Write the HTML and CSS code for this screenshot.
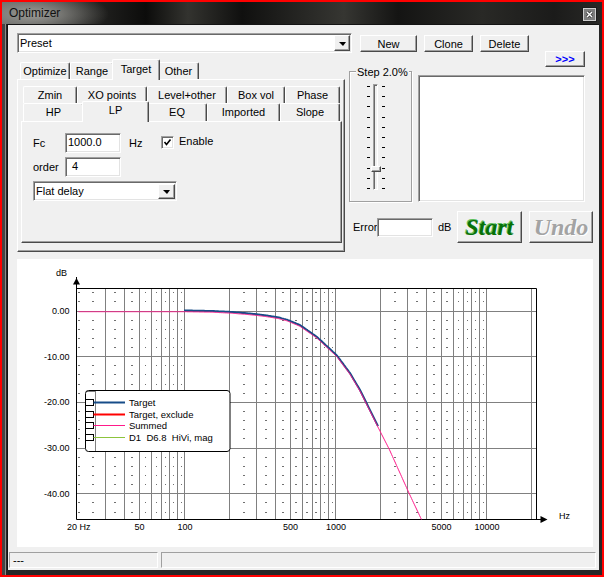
FILE: index.html
```html
<!DOCTYPE html>
<html lang="en">
<head>
  <meta charset="UTF-8" />
  <meta name="viewport" content="width=device-width, initial-scale=1" />
  <title>Optimizer</title>
  <link rel="stylesheet" href="styles.css">
</head>
<body>
  <div class="window">
    <div class="titlebar">
      <span class="title">Optimizer</span>
      <span class="close-btn">
        <svg width="15" height="15" viewBox="0 0 15 15">
          <rect x="0.5" y="0.5" width="14" height="14" fill="#7e7e7e" stroke="#1c1c1c"/>
          <rect x="1.5" y="1.5" width="12" height="12" fill="none" stroke="#cfcfcf"/>
          <path d="M5 5 L10 10 M10 5 L5 10" stroke="#3a3a3a" stroke-width="3"/>
          <path d="M5 5 L10 10 M10 5 L5 10" stroke="#ffffff" stroke-width="1.4"/>
        </svg>
      </span>
    </div>

    <div class="frame">
      <div class="client">
        <!-- preset row -->
        <div class="toolbar">
          <div class="combo preset">
            <span class="combo-text">Preset</span>
            <span class="drop-btn"><span class="arrow"></span></span>
          </div>
          <button class="btn btn-new">New</button>
          <button class="btn btn-clone">Clone</button>
          <button class="btn btn-delete">Delete</button>
        </div>

        <div class="main">
          <!-- tabs -->
          <div class="left">
            <div class="tab-row outer-tabs">
              <span class="tab">Optimize</span>
              <span class="tab">Range</span>
              <span class="tab active">Target</span>
              <span class="tab">Other</span>
            </div>
            <div class="panel panel-outer">
              <div class="tab-row inner-row1">
                <span class="tab">Zmin</span>
                <span class="tab">XO points</span>
                <span class="tab">Level+other</span>
                <span class="tab">Box vol</span>
                <span class="tab">Phase</span>
              </div>
              <div class="tab-row inner-row2">
                <span class="tab">HP</span>
                <span class="tab active">LP</span>
                <span class="tab">EQ</span>
                <span class="tab">Imported</span>
                <span class="tab">Slope</span>
              </div>
              <div class="panel panel-inner">
                <div class="field-row">
                  <span class="lbl">Fc</span>
                  <span class="input">1000.0</span>
                  <span class="unit">Hz</span>
                  <span class="check">
                    <svg width="9" height="9" viewBox="0 0 9 9">
                      <path d="M1.5 4 L3.5 6.5 L7.5 1.5" fill="none" stroke="#000" stroke-width="1.6"/>
                    </svg>
                  </span>
                  <span class="check-label">Enable</span>
                </div>
                <div class="field-row">
                  <span class="lbl">order</span>
                  <span class="input input-order">4</span>
                </div>
                <div class="combo delay">
                  <span class="combo-text">Flat delay</span>
                  <span class="drop-btn"><span class="arrow"></span></span>
                </div>
              </div>
            </div>
          </div>

          <!-- step, list, start -->
          <div class="side">
            <button class="btn more">&gt;&gt;&gt;</button>
            <div class="side-mid">
              <fieldset class="step">
                <legend>Step 2.0%</legend>
                <div class="slider">
                  <div class="ticks">
                    <i></i><i></i><i></i><i></i><i></i><i></i><i></i><i></i><i></i><i></i><i></i>
                  </div>
                  <div class="track"><span class="thumb"></span></div>
                  <div class="ticks ticks-right">
                    <i></i><i></i><i></i><i></i><i></i><i></i><i></i><i></i><i></i><i></i><i></i>
                  </div>
                </div>
              </fieldset>
              <div class="listbox"></div>
            </div>
            <div class="error-row">
              <span class="error-lbl">Error</span>
              <span class="input input-error"></span>
              <span class="db-lbl">dB</span>
              <button class="btn btn-big btn-start">Start</button>
              <button class="btn btn-big btn-undo">Undo</button>
            </div>
          </div>
        </div>

        <div class="chart">
          <svg id="plot" class="plot" width="576" height="288" viewBox="0 0 576 288"></svg>
        </div>

        <div class="statusbar">
          <div class="status-cell first">---</div>
          <div class="status-cell rest"></div>
        </div>
      </div>
    </div>
  </div>

  <script src="app.js"></script>
</body>
</html>
```

FILE: styles.css
```css
* {
  box-sizing: border-box;
  margin: 0;
  padding: 0;
}

body {
  font-family: "Liberation Sans", Arial, sans-serif;
  font-size: 11px;
  color: #000;
  background: #000;
}

.window {
  width: 604px;
  height: 577px;
  border: 2px solid #ff0000;
  display: flex;
  flex-direction: column;
  background: #2a2a2a;
}

/* title bar */
.titlebar {
  height: 22px;
  display: flex;
  justify-content: space-between;
  align-items: flex-start;
  background:
    radial-gradient(ellipse 75px 24px at 32px 12px, rgba(165, 165, 160, 0.9), rgba(165, 165, 160, 0)),
    linear-gradient(90deg, #5a5a58 0%, #262624 14%, #0c0c0b 24%, #33332f 31%, #10100f 40%, #363632 57%, #141413 66%, #292926 80%, #1b1b1a 92%, #292927 100%);
}

.title {
  padding-left: 7px;
  line-height: 23px;
  font-size: 12px;
  color: #111;
}

.close-btn {
  margin: 5px 5px 0 0;
  height: 15px;
}

.close-btn svg {
  display: block;
}

.frame {
  flex: 1;
  display: flex;
  padding: 0 3px 5px 5px;
  background: linear-gradient(90deg, #454545 0, #454545 3px, #8a8a8a 3px, #8a8a8a 4px, #262626 4px);
}

.client {
  flex: 1;
  display: flex;
  flex-direction: column;
  background: #f0f0f0;
  border-left: 1px solid #141414;
  border-top: 1px solid #141414;
}

/* common 3d widgets */
.btn {
  font: inherit;
  color: #000;
  background: #f0f0f0;
  border: 1px solid;
  border-color: #fff #4a4a4a #4a4a4a #fff;
  box-shadow: inset -1px -1px #a0a0a0;
}

.input,
.combo,
.listbox {
  background: #fff;
  border: 1px solid;
  border-color: #a0a0a0 #fff #fff #a0a0a0;
  box-shadow: inset 1px 1px #696969, inset -1px -1px #e3e3e3;
}

.combo {
  display: flex;
  align-items: center;
  height: 20px;
}

.combo-text {
  flex: 1;
  padding-left: 2px;
  line-height: 16px;
}

.drop-btn {
  width: 16px;
  height: 16px;
  margin-right: 1px;
  display: flex;
  align-items: center;
  justify-content: center;
  background: #f0f0f0;
  border: 1px solid;
  border-color: #fff #4a4a4a #4a4a4a #fff;
  box-shadow: inset -1px -1px #a0a0a0;
}

.arrow {
  width: 0;
  height: 0;
  border-left: 4px solid transparent;
  border-right: 3px solid transparent;
  border-top: 4px solid #000;
  margin-top: 1px;
}

/* preset row */
.toolbar {
  display: flex;
  align-items: flex-start;
  padding: 8px 0 0 9px;
}

.preset {
  width: 335px;
}

.toolbar .btn {
  height: 17px;
  margin-top: 2px;
  width: 49px;
  margin-left: 7px;
}

.toolbar .btn-new {
  width: 57px;
  margin-left: 8px;
}

.main {
  display: flex;
}

.left {
  width: 328px;
  margin-left: 9px;
  padding-top: 6px;
}

/* tabs */
.tab-row {
  display: grid;
  align-items: end;
}

.outer-tabs {
  grid-template-columns: 50px 44px 44px 41px;
  padding-left: 3px;
}

.inner-row1 {
  grid-template-columns: 54px 70px 80px 58px 55px;
  padding-left: 2px;
}

.inner-row2 {
  grid-template-columns: 61px 63px 60px 73px 60px;
  padding-left: 2px;
}

.tab {
  height: 17px;
  line-height: 16px;
  text-align: center;
  white-space: nowrap;
  background: #f0f0f0;
  border: 1px solid #fff;
  border-right-color: #4a4a4a;
  border-bottom: 0;
  border-radius: 2px 2px 0 0;
  box-shadow: inset -1px 0 #a0a0a0;
}

.inner-row2 .tab {
  height: 18px;
  line-height: 17px;
}

.tab.active {
  position: relative;
  z-index: 1;
  height: 21px;
  line-height: 18px;
  margin: 0 -2px -1px;
}

.inner-row2 .tab.active {
  height: 21px;
  line-height: 17px;
  margin-top: -2px;
}

.panel {
  border: 1px solid;
  border-color: #fff #4a4a4a #4a4a4a #fff;
  box-shadow: inset -1px -1px #a0a0a0;
}

.panel-outer {
  height: 173px;
  padding: 6px 0 0 3px;
}

.panel-inner {
  width: 321px;
  height: 122px;
  padding: 11px 0 0 11px;
}

.field-row {
  display: flex;
  align-items: center;
  height: 20px;
  margin-bottom: 4px;
}

.lbl {
  width: 32px;
}

.input {
  width: 56px;
  height: 20px;
  padding-left: 2px;
  line-height: 17px;
}

.input-order {
  padding-left: 6px;
}

.unit {
  width: 32px;
  margin-left: 8px;
}

.check {
  width: 13px;
  height: 13px;
  align-self: flex-start;
  margin-top: 3px;
  display: flex;
  align-items: center;
  justify-content: center;
  background: #fff;
  border: 1px solid;
  border-color: #a0a0a0 #fff #fff #a0a0a0;
  box-shadow: inset 1px 1px #696969, inset -1px -1px #e3e3e3;
}

.check-label {
  margin-left: 5px;
  align-self: flex-start;
  margin-top: 2px;
  line-height: 13px;
}

.delay {
  width: 144px;
}

.delay .drop-btn {
  width: 17px;
  height: 15px;
}

/* right side */
.side {
  width: 244px;
  margin-left: 4px;
  display: flex;
  flex-direction: column;
}

.more {
  align-self: flex-end;
  width: 40px;
  height: 16px;
  margin: -2px 8px 0 0;
  color: #0000ff;
  font-weight: bold;
  line-height: 12px;
}

.side-mid {
  display: flex;
  align-items: flex-start;
  margin-top: -3px;
}

.step {
  width: 63px;
  height: 138px;
  border: 1px solid #a0a0a0;
  box-shadow: inset 1px 1px #fff, 1px 1px #fff;
}

.step legend {
  margin-left: 6px;
  padding: 3px 1px 0;
  line-height: 11px;
  background: #f0f0f0;
}

.slider {
  display: flex;
  height: 106px;
  margin: 6px 0 0 17px;
}

.ticks {
  width: 3px;
  display: flex;
  flex-direction: column;
  justify-content: space-between;
  padding: 2px 0 1px;
}

.ticks i {
  display: block;
  height: 1px;
  background: #000;
}

.ticks-right {
  margin-left: 4px;
}

.track {
  position: relative;
  width: 5px;
  margin-left: 3px;
  background: #f0f0f0;
  border: 1px solid;
  border-color: #a0a0a0 #fff #fff #a0a0a0;
  box-shadow: inset 1px 1px #696969;
}

.thumb {
  position: absolute;
  left: -3px;
  top: 81px;
  width: 10px;
  height: 6px;
  background: #f0f0f0;
  border: 1px solid;
  border-color: #fff #4a4a4a #4a4a4a #fff;
  box-shadow: inset -1px -1px #a0a0a0;
}

.listbox {
  width: 167px;
  height: 127px;
  margin: 11px 0 0 6px;
}

.error-row {
  display: flex;
  align-items: center;
  height: 32px;
  margin-top: 9px;
  padding-left: 4px;
}

.error-lbl {
  width: 24px;
}

.input-error {
  height: 19px;
}

.db-lbl {
  width: 14px;
  margin-left: 5px;
}

.btn-big {
  width: 65px;
  height: 32px;
  margin-left: 5px;
  font-family: "Liberation Serif", "Times New Roman", serif;
  font-size: 24px;
  font-weight: bold;
  font-style: italic;
  line-height: 26px;
}

.btn-start {
  color: #077007;
  text-shadow: -1px -1px 0 #5fc05f;
}

.btn-undo {
  width: 64px;
  margin-left: 7px;
  color: #a3a3a3;
  text-shadow: 1px 1px 0 #ffffff;
}

/* chart */
.chart {
  width: 576px;
  height: 288px;
  margin: 7px 0 0 9px;
  background: #fff;
}

.plot {
  display: block;
}

.plot text {
  font-family: "Liberation Sans", Arial, sans-serif;
  font-size: 9px;
  fill: #000;
}

.plot .legend-text {
  font-size: 9.5px;
}

/* status bar */
.statusbar {
  display: flex;
  margin-top: 5px;
  padding-left: 1px;
}

.status-cell {
  height: 16px;
  line-height: 14px;
  padding-left: 3px;
  border: 1px solid;
  border-color: #a0a0a0 #fff #fff #a0a0a0;
}

.status-cell.first {
  width: 149px;
}

.status-cell.rest {
  width: 435px;
  margin-left: 3px;
}
```

FILE: app.js
```js
var NS = "http://www.w3.org/2000/svg";
var plot = document.getElementById("plot");

// plot frame (svg coords, chart origin at page 17,259)
var LEFT = 59.5, RIGHT = 519.5, TOP = 29.5, BOTTOM = 260.5;

function xOf(f) { return 318 + 151 * Math.log10(f / 1000); }
function yOf(db) { return 51.5 - 4.57 * db; }

function el(name, attrs, parent) {
  var node = document.createElementNS(NS, name);
  for (var k in attrs) node.setAttribute(k, attrs[k]);
  (parent || plot).appendChild(node);
  return node;
}

function label(x, y, str, anchor, cls) {
  var t = el("text", { x: x, y: y, "text-anchor": anchor || "start" });
  if (cls) t.setAttribute("class", cls);
  t.textContent = str;
  return t;
}

// vertical grid lines and minor marks
var majors = [], minors = [62];
[10, 100, 1000, 10000].forEach(function (d) {
  for (var m = 1; m <= 9; m++) {
    var f = d * m;
    if (f > 20 && f <= 20000) majors.push(f);
    if (m >= 2 && d * (m + 0.5) < 20000) minors.push(xOf(d * (m + 0.5)));
  }
});

majors.forEach(function (f) {
  var x = Math.round(xOf(f)) + 0.5;
  el("line", { x1: x, y1: TOP, x2: x, y2: BOTTOM, stroke: "#808080" });
});

[0, -10, -20, -30, -40].forEach(function (db) {
  var y = Math.round(yOf(db)) + 0.5;
  el("line", { x1: LEFT, y1: y, x2: RIGHT, y2: y, stroke: "#808080" });
});

for (var db = 4; db >= -44; db -= 2) {
  if (db % 10 === 0) continue;
  var y = Math.round(yOf(db));
  minors.forEach(function (x) {
    var w = x < 300 && x > 120 && x < 168 ? 1 : 2;
    if (x > 300 && x < 318) w = 1;
    if (x > 440 && x < 490) w = 1;
    el("rect", { x: Math.round(x) - (w > 1 ? 1 : 0), y: y, width: w, height: 1, fill: "#707070" });
  });
}

// frame and axes
el("line", { x1: LEFT, y1: TOP, x2: RIGHT, y2: TOP, stroke: "#000" });
el("line", { x1: RIGHT, y1: TOP, x2: RIGHT, y2: BOTTOM, stroke: "#000" });
el("line", { x1: LEFT, y1: 18, x2: LEFT, y2: BOTTOM, stroke: "#000" });
el("line", { x1: LEFT, y1: BOTTOM, x2: 529, y2: BOTTOM, stroke: "#000" });
el("path", { d: "M56 25.5 L59.5 19 L63 25.5 Z", fill: "#000" });
el("path", { d: "M523.5 257 L530.5 260.5 L523.5 264 Z", fill: "#000" });

// curves
var pts = [[20, 0], [100, 0], [150, -0.1], [200, -0.3], [250, -0.55], [300, -0.8], [354, -1.1],
  [420, -1.5], [481, -2.0], [586, -3.2], [760, -5.8], [1026, -9.8], [1257, -13.7], [1464, -17.4],
  [1927, -25.3], [2278, -30], [3119, -40], [3763, -45.7], [4600, -52]];

function level(f) {
  var lf = Math.log10(f);
  for (var i = 1; i < pts.length; i++) {
    var a = pts[i - 1], b = pts[i];
    if (f <= b[0]) {
      var la = Math.log10(a[0]), lb = Math.log10(b[0]);
      return a[1] + (lf - la) / (lb - la) * (b[1] - a[1]);
    }
  }
  return pts[pts.length - 1][1];
}

function curve(fromF, toF, offset) {
  var out = [], x0 = xOf(fromF), x1 = xOf(toF);
  for (var x = x0; x <= x1; x += 1) {
    var f = 1000 * Math.pow(10, (x - 318) / 151);
    var y = yOf(level(f)) + offset;
    out.push(x.toFixed(1) + "," + y.toFixed(1));
    if (y > BOTTOM + 4) break;
  }
  return out.join(" ");
}

var clip = el("clipPath", { id: "frameClip" });
el("rect", { x: LEFT, y: TOP, width: RIGHT - LEFT, height: BOTTOM - TOP }, clip);

el("polyline", { points: curve(100, 1950, 0), fill: "none", stroke: "#174c88", "stroke-width": 2, "clip-path": "url(#frameClip)" });
el("polyline", { points: curve(20, 5000, 1.2), fill: "none", stroke: "#ff1a8a", "stroke-width": 1, "clip-path": "url(#frameClip)" });

// axis labels
label(39, 16.5, "dB");
[["0.00", 0], ["-10.00", -10], ["-20.00", -20], ["-30.00", -30], ["-40.00", -40]].forEach(function (p) {
  label(52.5, yOf(p[1]) + 3.3, p[0], "end");
});
label(50, 270.5, "20 Hz");
[50, 100, 500, 1000, 5000, 10000].forEach(function (f) {
  label(xOf(f) + 1, 270.5, String(f), "middle");
});
label(542, 260, "Hz");

// legend
el("rect", { x: 68.5, y: 131.5, width: 144.5, height: 61, rx: 3, fill: "#fff", stroke: "#000" });
el("path", { d: "M69.5 132.5 H78.5 V192", fill: "none", stroke: "#000", "stroke-dasharray": "1 1" });

var rows = [
  { y: 143, text: "Target", color: "#174c88", w: 2 },
  { y: 154.5, text: "Target, exclude", color: "#ff0000", w: 2 },
  { y: 166, text: "Summed", color: "#ff1a8a", w: 1 },
  { y: 178, text: "D1  D6.8  HiVi, mag", color: "#8cc43c", w: 1 }
];

rows.forEach(function (r) {
  var cy = Math.round(r.y);
  el("rect", { x: 68.5, y: cy - 3 + 0.5, width: 8, height: 6, fill: "#fff", stroke: "#000" });
  el("line", { x1: 76.5, y1: cy + 0.5, x2: 108, y2: cy + 0.5, stroke: r.color, "stroke-width": r.w });
  var t = label(112, cy + 3.8, r.text, "start", "legend-text");
  t.setAttribute("xml:space", "preserve");
  t.style.whiteSpace = "pre";
});
```
